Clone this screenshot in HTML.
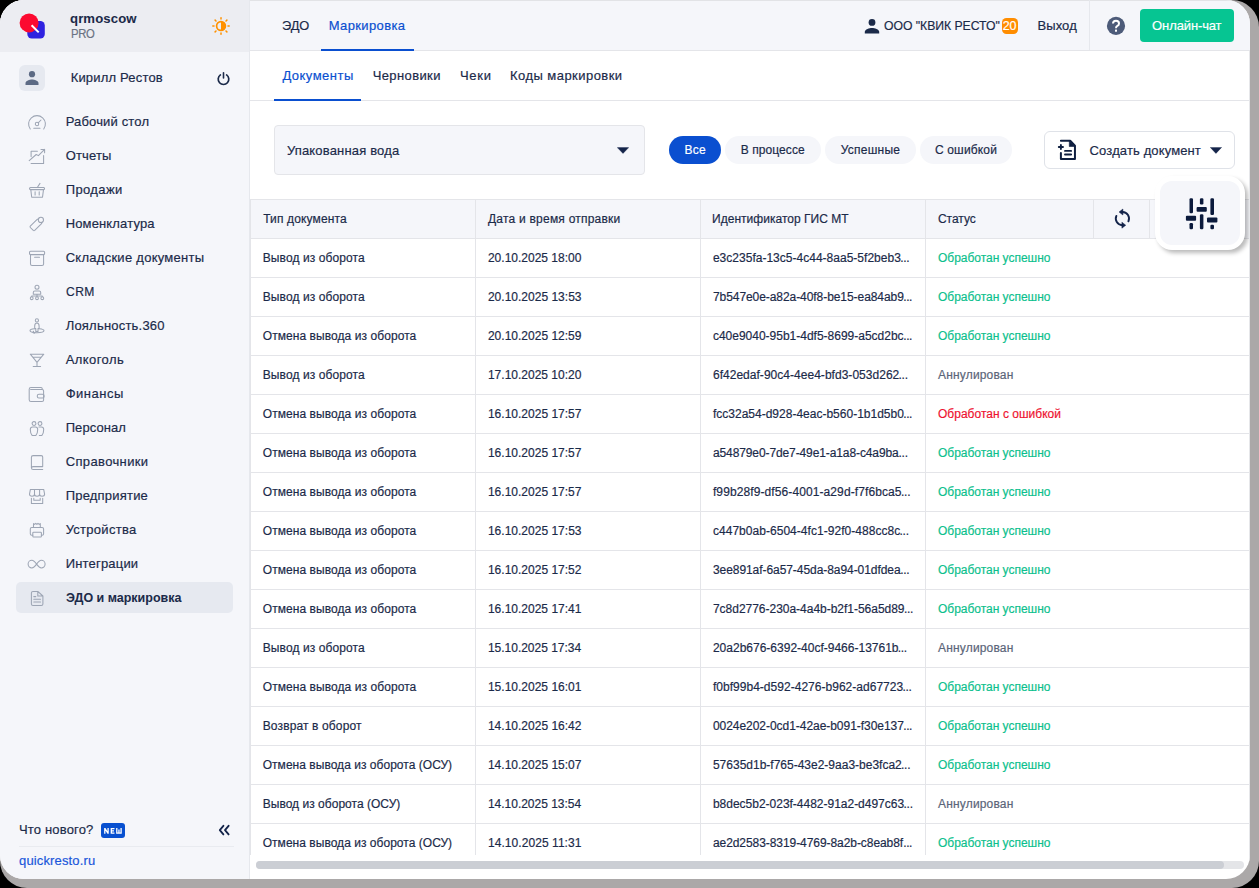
<!DOCTYPE html>
<html lang="ru">
<head>
<meta charset="utf-8">
<title>Quick Resto</title>
<style>
*{box-sizing:border-box;margin:0;padding:0}
html,body{width:1259px;height:888px;overflow:hidden;background:#000}
body{font-family:"Liberation Sans",sans-serif;color:#1b2a49;font-size:13px;position:relative;-webkit-text-stroke:0.18px}
.shadow{position:absolute;left:0;top:0;width:1259px;height:888px;background:#aba8a8;border-radius:24px 27px 27px 27px}
.win{position:absolute;left:0;top:0;width:1250px;height:879px;background:#fff;border-radius:24px;overflow:hidden}
.side{position:absolute;left:0;top:0;width:250px;height:879px;background:#f5f6fa;border-right:1px solid #e6e8ed}
.side-head{position:absolute;left:0;top:0;width:249px;height:52px;background:#ecedf2}
.t{position:absolute;white-space:nowrap;line-height:16px}
.ico{position:absolute;left:27px;width:20px;height:20px}
.ico svg{width:20px;height:20px;fill:none;stroke:#9da5b4;stroke-width:1.05;stroke-linecap:round;stroke-linejoin:round}
.head{position:absolute;left:250px;top:0;width:1000px;height:51px;background:#f5f6fa;border-bottom:1px solid #e4e5e9}
.pill{position:absolute;top:136px;height:28px;border-radius:14px;background:#f5f6fa}
.hl{position:absolute;height:1px;background:#e4e5e9}
.vl{position:absolute;width:1px;background:#e4e5e9}
.ok{color:#0cbf8d}.err{color:#ee1230}.ann{color:#5b6579}
</style>
</head>
<body>
<div class="shadow"></div>
<div class="win">

<div class="side">
  <div class="side-head"></div>
  <svg style="position:absolute;left:18px;top:11px" width="30" height="30" viewBox="0 0 30 30">
    <rect x="9.3" y="10" width="17.5" height="17.5" rx="4.5" fill="#2f22e0"/>
    <circle cx="11.1" cy="11.9" r="9.5" fill="#fc0a30"/>
    <line x1="13.6" y1="14.3" x2="20.7" y2="21.4" stroke="#fff" stroke-width="2"/>
  </svg>
  <div class="t" style="left:70.00px;top:11px;font-size:13.5px;letter-spacing:0.099px;font-weight:bold;transform:scaleX(0.975);transform-origin:0 50%;-webkit-text-stroke:0.05px;">qrmoscow</div>
  <div class="t" style="left:71.00px;top:26px;font-size:12px;letter-spacing:-0.311px;color:#6a7283;transform:scaleX(0.94);transform-origin:0 50%;">PRO</div>
  <svg style="position:absolute;left:211px;top:16px" width="20" height="20" viewBox="0 0 20 20">
    <g stroke="#ff9100" stroke-width="1.5" stroke-linecap="round">
      <line x1="10" y1="1.8" x2="10" y2="3"/><line x1="10" y1="17" x2="10" y2="18.2"/>
      <line x1="1.8" y1="10" x2="3" y2="10"/><line x1="17" y1="10" x2="18.2" y2="10"/>
      <line x1="4.1" y1="4.1" x2="5" y2="5"/><line x1="15" y1="15" x2="15.9" y2="15.9"/>
      <line x1="4.1" y1="15.9" x2="5" y2="15"/><line x1="15" y1="5" x2="15.9" y2="4.1"/>
    </g>
    <circle cx="10" cy="10" r="4.4" fill="none" stroke="#ff9100" stroke-width="1.7"/>
    <path d="M10 5.4 A4.6 4.6 0 0 1 10 14.6 Z" fill="#ff9100"/>
  </svg>
  <div style="position:absolute;left:19px;top:65px;width:26px;height:26px;border-radius:6px;background:#e6e9f0"></div>
  <svg style="position:absolute;left:24px;top:70px" width="16" height="16" viewBox="0 0 16 16">
    <circle cx="8" cy="4.2" r="3.1" fill="#5c6a84"/>
    <path d="M1.5 14.9 v-1.9 c0-2.3 4.2-3.5 6.5-3.5 s6.5 1.2 6.5 3.5 v1.9 z" fill="#5c6a84"/>
  </svg>
  <div class="t" style="left:70.66px;top:70px;font-size:13px;letter-spacing:0.183px;">Кирилл Рестов</div>
  <svg style="position:absolute;left:215px;top:70px" width="17" height="17" viewBox="0 0 17 17">
    <path d="M5.4 4.9 A5.3 5.3 0 1 0 11.6 4.9" fill="none" stroke="#1b2a49" stroke-width="1.7" stroke-linecap="round"/>
    <line x1="8.5" y1="2.7" x2="8.5" y2="8" stroke="#1b2a49" stroke-width="1.6" stroke-linecap="round"/>
  </svg>
<div class="ico" style="top:112px"><svg viewBox="0 0 20 20"><path d="M3.25 17 A8.4 8.4 0 1 1 16.75 17"/><circle cx="10" cy="12" r="1.7"/><line x1="11.2" y1="10.8" x2="14" y2="8"/><line x1="6.8" y1="16.2" x2="13" y2="16.2"/></svg></div><div class="t" style="left:65.66px;top:114px;font-size:13px;letter-spacing:0.160px;">Рабочий стол</div>
<div class="ico" style="top:146px"><svg viewBox="0 0 20 20"><path d="M2.2 14.6 L9.2 8.5 L11.4 9.6 L17.6 3.4 M14 3.4 H17.6 V6.8 M10.4 5.2 H4.1 V10.6 M4.1 17.5 H16.6 V9.4"/></svg></div><div class="t" style="left:65.66px;top:148px;font-size:13px;letter-spacing:0.168px;">Отчеты</div>
<div class="ico" style="top:180px"><svg viewBox="0 0 20 20"><path d="M13 3.4 L10.3 7.5"/><rect x="2.5" y="7.5" width="15.1" height="2.1" rx="1"/><path d="M3.8 9.6 L4.7 17.2 H15.5 L16.5 9.6 M8.1 11.8 V15 M12.2 11.8 V15"/></svg></div><div class="t" style="left:65.66px;top:182px;font-size:13px;letter-spacing:0.398px;">Продажи</div>
<div class="ico" style="top:214px"><svg viewBox="0 0 20 20"><path d="M11.4 5.1 Q10.6 4.9 9.9 5.6 L3.3 12.2 Q2.7 12.9 3.3 13.5 L6.3 16.4 Q7 17 7.7 16.4 L14.3 9.8 Q14.9 9.2 14.8 8.5"/><circle cx="13.9" cy="5.9" r="2.6"/></svg></div><div class="t" style="left:65.66px;top:216px;font-size:13px;letter-spacing:0.144px;">Номенклатура</div>
<div class="ico" style="top:248px"><svg viewBox="0 0 20 20"><rect x="2.5" y="3.3" width="15.1" height="3.3" rx="1"/><path d="M3.5 6.6 V15.9 Q3.5 17.5 5.1 17.5 H15 Q16.6 17.5 16.6 15.9 V6.6 M7.6 9.2 H12.5"/></svg></div><div class="t" style="left:65.66px;top:250px;font-size:13px;letter-spacing:0.270px;">Складские документы</div>
<div class="ico" style="top:282px"><svg viewBox="0 0 20 20"><circle cx="10" cy="5.3" r="2"/><path d="M6.3 12.2 V10.4 Q6.3 8.9 7.8 8.9 H12.2 Q13.7 8.9 13.7 10.4 V12.2 Z M10 12.2 V14 M4.7 14.8 V14 H15.3 V14.8 M10 14 V14.8"/><circle cx="4.7" cy="16.2" r="1.4"/><circle cx="10" cy="16.2" r="1.4"/><circle cx="15.3" cy="16.2" r="1.4"/></svg></div><div class="t" style="left:66.00px;top:284px;font-size:13px;letter-spacing:0.465px;transform:scaleX(0.93);transform-origin:0 50%;">CRM</div>
<div class="ico" style="top:316px"><svg viewBox="0 0 20 20"><circle cx="9.9" cy="4.4" r="1.6"/><path d="M7.7 10 Q7.7 6.9 9.9 6.9 Q12.1 6.9 12.1 10 V12.6 H11 V15.4 H8.8 V12.6 H7.7 Z"/><path d="M7.4 12.7 C4.6 13 3 13.7 3 14.6 C3 15.8 6 16.7 9.9 16.7 C13.8 16.7 17 15.8 17 14.6 C17 13.7 15.2 13 12.4 12.7 M6.6 15.3 L5.8 16.6 L7.4 17.3"/></svg></div><div class="t" style="left:65.66px;top:318px;font-size:13px;letter-spacing:0.213px;">Лояльность.360</div>
<div class="ico" style="top:350px"><svg viewBox="0 0 20 20"><path d="M3.3 4.2 H16.8 L10 12.3 Z M10 12.3 V16.4 M6.2 16.4 H13.6 M5.9 7.2 H14.2"/></svg></div><div class="t" style="left:65.66px;top:352px;font-size:13px;letter-spacing:0.437px;">Алкоголь</div>
<div class="ico" style="top:384px"><svg viewBox="0 0 20 20"><path d="M15.2 5.5 V4.6 Q15.2 3.4 14 3.4 H4 Q2.2 3.4 2.2 5.2 V15.8 Q2.2 17.5 4 17.5 H15 Q16.6 17.5 16.6 15.9 V7.1 Q16.6 5.5 15 5.5 H3.6"/><rect x="10.3" y="10.2" width="6.8" height="3.8" rx="1.6"/></svg></div><div class="t" style="left:65.66px;top:386px;font-size:13px;letter-spacing:0.504px;">Финансы</div>
<div class="ico" style="top:418px"><svg viewBox="0 0 20 20"><circle cx="7" cy="5.5" r="1.9"/><circle cx="13" cy="5.5" r="1.9"/><path d="M3.3 11.6 Q3.3 9 5.6 9 H8.4 Q10.7 9 10.7 11.6 Q10.7 15.4 8.9 17.4 H5.1 Q3.3 15.4 3.3 11.6 Z"/><path d="M11.9 9 H14.4 Q16.7 9 16.7 11.6 Q16.7 15.4 14.9 17.4 H12.3"/></svg></div><div class="t" style="left:65.66px;top:420px;font-size:13px;letter-spacing:0.084px;">Персонал</div>
<div class="ico" style="top:452px"><svg viewBox="0 0 20 20"><path d="M15.7 17.5 H6.2 Q4.4 17.5 4.4 15.8 V5.3 Q4.4 3.6 6.2 3.6 H14.2 Q15.7 3.6 15.7 5.1 V14.6 H6 Q4.6 14.6 4.5 16"/></svg></div><div class="t" style="left:65.66px;top:454px;font-size:13px;letter-spacing:0.370px;">Справочники</div>
<div class="ico" style="top:486px"><svg viewBox="0 0 20 20"><path d="M3.4 3.4 H16.7 L17.6 8.2 Q17.6 10.2 15.1 10.2 Q12.6 10.2 12.6 8.2 Q12.6 10.2 10.05 10.2 Q7.5 10.2 7.5 8.2 Q7.5 10.2 5 10.2 Q2.5 10.2 2.5 8.2 Z M7.5 3.4 V8.2 M12.6 3.4 V8.2"/><path d="M4.4 12.3 V17.5 H15.7 V12.3 M6.8 12.3 V14.2 H13.2 V12.3"/></svg></div><div class="t" style="left:65.66px;top:488px;font-size:13px;letter-spacing:0.205px;">Предприятие</div>
<div class="ico" style="top:520px"><svg viewBox="0 0 20 20"><path d="M6.5 7.4 V3.6 L7.6 4.4 L8.8 3.4 L9.9 4.4 L11 3.4 L12.2 4.4 L13.3 3.6 V7.4"/><path d="M5.8 15.2 H4.8 Q3.3 15.2 3.3 13.7 V8.9 Q3.3 7.4 4.8 7.4 H15.1 Q16.6 7.4 16.6 8.9 V13.7 Q16.6 15.2 15.1 15.2 H14.4"/><rect x="5.8" y="12.2" width="8.6" height="4.8" rx="0.8"/></svg></div><div class="t" style="left:65.66px;top:522px;font-size:13px;letter-spacing:0.276px;">Устройства</div>
<div class="ico" style="top:554px"><svg viewBox="0 0 20 20"><path d="M9.6 10.1 C7.6 7.4 6.6 6.3 4.9 6.3 C2.8 6.3 1.1 8 1.1 10.1 C1.1 12.2 2.8 13.9 4.9 13.9 C6.6 13.9 7.6 12.8 9.6 10.1 C11.6 7.4 12.6 6.3 14.3 6.3 C16.4 6.3 18.1 8 18.1 10.1 C18.1 12.2 16.4 13.9 14.3 13.9 C12.6 13.9 11.6 12.8 9.6 10.1 Z"/></svg></div><div class="t" style="left:65.66px;top:556px;font-size:13px;letter-spacing:0.189px;">Интеграции</div>
<div style="position:absolute;left:16px;top:582px;width:217px;height:31.4px;border-radius:5px;background:#e6e9f0"></div>
<div class="ico" style="top:588px"><svg viewBox="0 0 20 20"><path d="M10.8 3.4 H6 Q4.4 3.4 4.4 5 V15.9 Q4.4 17.5 6 17.5 H14.3 Q15.9 17.5 15.9 15.9 V8 Z M10.8 3.4 V8 H15.9 M6.8 8.6 H8.8 M6.8 11.2 H13.5 M6.8 14 H13.5"/></svg></div><div class="t" style="left:66.00px;top:590px;font-size:13px;letter-spacing:-0.004px;font-weight:bold;transform:scaleX(0.96);transform-origin:0 50%;-webkit-text-stroke:0.05px;">ЭДО и маркировка</div>

  <div class="t" style="left:18.88px;top:822px;font-size:13px;letter-spacing:0.182px;">Что нового?</div>
  <svg style="position:absolute;left:101px;top:823px" width="24" height="15" viewBox="0 0 24 15"><rect width="24" height="15" rx="3" fill="#0850d0"/><path d="M3.8 5 V10.75 M7.1 5 V10.75 M3.9 5.4 L7 10.35 M10.3 5 V10.75 M10.3 5.65 H13.5 M10.3 10.1 H13.5 M10.3 7.9 H13 M15.8 5 V10.75 M20.1 5 V10.75 M15.8 10.1 H20.1 M17.95 6.4 V10.1" fill="none" stroke="#fff" stroke-width="1.3"/></svg>
  <svg style="position:absolute;left:217px;top:823px" width="14" height="14" viewBox="0 0 14 14"><path d="M6.4 2.8 L2.8 7.1 L6.4 11.4 M11.6 2.8 L8 7.1 L11.6 11.4" fill="none" stroke="#14244a" stroke-width="1.85" stroke-linecap="round" stroke-linejoin="round"/></svg>
  <div class="hl" style="left:19px;top:846px;width:215px;background:#e9ebf0"></div>
  <div class="t" style="left:19.04px;top:853px;font-size:13px;letter-spacing:0.142px;color:#1a56db;">quickresto.ru</div>
</div>


<div class="head"></div>
  <div class="hl" style="left:250px;top:0;width:1000px;background:#e2e3e6"></div>
  <div class="t" style="left:282.00px;top:18px;font-size:13px;letter-spacing:-0.098px;transform:scaleX(0.99);transform-origin:0 50%;">ЭДО</div>
  <div class="t" style="left:328.73px;top:18px;font-size:13px;letter-spacing:0.367px;color:#0a4fd0;">Маркировка</div>
  <div style="position:absolute;left:321px;top:49px;width:93px;height:2px;background:#0a4fd0"></div>
  <svg style="position:absolute;left:864px;top:18px" width="16" height="16" viewBox="0 0 16 16">
    <circle cx="8" cy="4.4" r="3.4" fill="#1b2a49"/>
    <path d="M0.8 15.6 v-1.8 c0-2.6 4.6-3.9 7.2-3.9 s7.2 1.3 7.2 3.9 v1.8 z" fill="#1b2a49"/>
  </svg>
  <div class="t" style="left:884.00px;top:18px;font-size:13px;letter-spacing:-0.037px;transform:scaleX(0.94);transform-origin:0 50%;">ООО "КВИК РЕСТО"</div>
  <div style="position:absolute;left:1002px;top:18px;width:16px;height:16px;border-radius:4.5px;background:#ff8d00"></div>
  <div class="t" style="left:1002.77px;top:18px;font-size:12.5px;letter-spacing:-0.296px;color:#fff;">20</div>
  <div class="t" style="left:1037.45px;top:18px;font-size:13px;letter-spacing:0.102px;">Выход</div>
  <div class="vl" style="left:1089px;top:0;height:50px;background:#e6e8ed"></div>
  <svg style="position:absolute;left:1106px;top:16px" width="20" height="20" viewBox="0 0 20 20">
    <circle cx="10" cy="9.9" r="9.1" fill="#4d5b79"/>
    <path d="M7 7.6 Q7 4.8 10 4.8 Q13 4.8 13 7.4 Q13 9 11.4 9.9 Q10 10.7 10 12.2" fill="none" stroke="#fff" stroke-width="2"/>
    <rect x="9" y="13.6" width="2" height="2.1" fill="#fff"/>
  </svg>
  <div style="position:absolute;left:1140px;top:9px;width:94px;height:33px;border-radius:4px;background:#06c592"></div>
  <div class="t" style="left:1152.11px;top:18px;font-size:13px;letter-spacing:-0.120px;color:#fff;">Онлайн-чат</div>


<div class="t" style="left:282.42px;top:68px;font-size:13px;letter-spacing:0.479px;color:#0a4fd0;">Документы</div>
<div class="t" style="left:372.65px;top:68px;font-size:13px;letter-spacing:0.397px;">Черновики</div>
<div class="t" style="left:459.92px;top:68px;font-size:13px;letter-spacing:0.749px;">Чеки</div>
<div class="t" style="left:509.97px;top:68px;font-size:13px;letter-spacing:0.459px;">Коды маркировки</div>
<div class="hl" style="left:250px;top:100px;width:999px"></div>
<div style="position:absolute;left:274px;top:99px;width:87px;height:2px;background:#0a4fd0"></div>

<div style="position:absolute;left:274px;top:125px;width:371px;height:50px;border:1px solid #e4e5e9;border-radius:4px;background:#f5f6fa"></div>
<div class="t" style="left:286.94px;top:143px;font-size:13px;letter-spacing:0.163px;">Упакованная вода</div>
<svg style="position:absolute;left:616.5px;top:147px" width="12" height="7" viewBox="0 0 12 7"><path d="M0.3 0.6 H11.7 L6 6.4 Z" fill="#14244a" stroke="#14244a" stroke-width="0.4" stroke-linejoin="round"/></svg>

<div class="pill" style="left:669px;width:52px;background:#0a4fd0"></div>
<div class="pill" style="left:725px;width:96px"></div>
<div class="pill" style="left:825px;width:91px"></div>
<div class="pill" style="left:920px;width:92px"></div>
<div class="t" style="left:684.51px;top:142px;font-size:12px;letter-spacing:0.265px;color:#fff;">Все</div>
<div class="t" style="left:740.63px;top:142px;font-size:12px;letter-spacing:0.090px;">В процессе</div>
<div class="t" style="left:840.65px;top:142px;font-size:12px;letter-spacing:0.253px;">Успешные</div>
<div class="t" style="left:934.99px;top:142px;font-size:12px;letter-spacing:0.151px;">С ошибкой</div>

<div style="position:absolute;left:1044px;top:131px;width:191px;height:38px;border:1px solid #dfe2e8;border-radius:6px;background:#fff"></div>
<svg style="position:absolute;left:1057px;top:139px" width="21" height="22" viewBox="0 0 21 22">
  <path d="M3.9 1.75 H13.2 L17.95 6.8 V19.9 H3.9 V14" fill="none" stroke="#0f1f40" stroke-width="2" stroke-linejoin="round" stroke-linecap="round"/>
  <path d="M12.3 1.75 V7.5 H17.95 Z" fill="#0f1f40" stroke="#0f1f40" stroke-width="0.6" stroke-linejoin="round"/>
  <path d="M1.8 8 H6 M3.9 6 V10" stroke="#0f1f40" stroke-width="1.9" stroke-linecap="round" fill="none"/>
  <path d="M8 11.9 H14.1 M8 15.55 H14.1" stroke="#0f1f40" stroke-width="1.9" stroke-linecap="round" fill="none"/>
</svg>
<div class="t" style="left:1089.61px;top:143px;font-size:13px;letter-spacing:0.126px;">Создать документ</div>
<svg style="position:absolute;left:1209.7px;top:147px" width="12" height="7" viewBox="0 0 12 7"><path d="M0.3 0.4 H11.6 L5.95 6.4 Z" fill="#14244a" stroke="#14244a" stroke-width="0.4" stroke-linejoin="round"/></svg>

<div style="position:absolute;left:250px;top:199px;width:999px;height:40px;background:#f5f6fa;border-top:1px solid #e4e5e9;border-bottom:1px solid #e4e5e9"></div>
<div class="vl" style="left:250px;top:199px;height:656px"></div>
<div class="vl" style="left:475px;top:199px;height:656px"></div>
<div class="vl" style="left:700px;top:199px;height:656px"></div>
<div class="vl" style="left:925px;top:199px;height:656px"></div>
<div class="vl" style="left:1093px;top:199px;height:40px"></div>
<div class="vl" style="left:1149px;top:199px;height:40px"></div>
<div class="t" style="left:263.18px;top:211px;font-size:12px;letter-spacing:0.141px;">Тип документа</div>
<div class="t" style="left:487.98px;top:211px;font-size:12px;letter-spacing:0.225px;">Дата и время отправки</div>
<div class="t" style="left:712.09px;top:211px;font-size:12px;letter-spacing:0.019px;">Идентификатор ГИС МТ</div>
<div class="t" style="left:937.99px;top:211px;font-size:12px;letter-spacing:-0.028px;">Статус</div>
<div class="t" style="left:262.74px;top:250px;font-size:12px;letter-spacing:0.091px;">Вывод из оборота</div><div class="t" style="left:487.94px;top:250px;font-size:12px;letter-spacing:0.003px;">20.10.2025 18:00</div><div class="t" style="left:712.95px;top:250px;font-size:12px;letter-spacing:0.013px;">e3c235fa-13c5-4c44-8aa5-5f2beb3</div><div class="t" style="left:900.36px;top:250px;font-size:12px;letter-spacing:-0.414px;">...</div><div class="t" style="left:938.01px;top:250px;font-size:12px;letter-spacing:-0.022px;color:#0cbf8d;">Обработан успешно</div>
<div class="hl" style="left:250px;top:277px;width:999px"></div>
<div class="t" style="left:262.74px;top:289px;font-size:12px;letter-spacing:0.091px;">Вывод из оборота</div><div class="t" style="left:487.94px;top:289px;font-size:12px;letter-spacing:0.009px;">20.10.2025 13:53</div><div class="t" style="left:712.95px;top:289px;font-size:12px;letter-spacing:-0.064px;">7b547e0e-a82a-40f8-be15-ea84ab9</div><div class="t" style="left:903.32px;top:289px;font-size:12px;letter-spacing:-0.428px;">...</div><div class="t" style="left:938.01px;top:289px;font-size:12px;letter-spacing:-0.022px;color:#0cbf8d;">Обработан успешно</div>
<div class="hl" style="left:250px;top:316px;width:999px"></div>
<div class="t" style="left:262.74px;top:328px;font-size:12px;letter-spacing:0.069px;">Отмена вывода из оборота</div><div class="t" style="left:487.94px;top:328px;font-size:12px;letter-spacing:0.008px;">20.10.2025 12:59</div><div class="t" style="left:712.95px;top:328px;font-size:12px;letter-spacing:-0.006px;">c40e9040-95b1-4df5-8699-a5cd2bc</div><div class="t" style="left:903.32px;top:328px;font-size:12px;letter-spacing:-0.428px;">...</div><div class="t" style="left:938.01px;top:328px;font-size:12px;letter-spacing:-0.022px;color:#0cbf8d;">Обработан успешно</div>
<div class="hl" style="left:250px;top:355px;width:999px"></div>
<div class="t" style="left:262.74px;top:367px;font-size:12px;letter-spacing:0.091px;">Вывод из оборота</div><div class="t" style="left:487.94px;top:367px;font-size:12px;letter-spacing:0.003px;">17.10.2025 10:20</div><div class="t" style="left:712.95px;top:367px;font-size:12px;letter-spacing:0.028px;">6f42edaf-90c4-4ee4-bfd3-053d262</div><div class="t" style="left:898.45px;top:367px;font-size:12px;letter-spacing:-0.231px;">...</div><div class="t" style="left:938.01px;top:367px;font-size:12px;letter-spacing:0.176px;color:#5b6579;">Аннулирован</div>
<div class="hl" style="left:250px;top:394px;width:999px"></div>
<div class="t" style="left:262.74px;top:406px;font-size:12px;letter-spacing:0.069px;">Отмена вывода из оборота</div><div class="t" style="left:487.94px;top:406px;font-size:12px;letter-spacing:0.007px;">16.10.2025 17:57</div><div class="t" style="left:712.95px;top:406px;font-size:12px;letter-spacing:0.005px;">fcc32a54-d928-4eac-b560-1b1d5b0</div><div class="t" style="left:903.32px;top:406px;font-size:12px;letter-spacing:-0.428px;">...</div><div class="t" style="left:938.01px;top:406px;font-size:12px;letter-spacing:0.009px;color:#ee1230;">Обработан с ошибкой</div>
<div class="hl" style="left:250px;top:433px;width:999px"></div>
<div class="t" style="left:262.74px;top:445px;font-size:12px;letter-spacing:0.069px;">Отмена вывода из оборота</div><div class="t" style="left:487.94px;top:445px;font-size:12px;letter-spacing:0.007px;">16.10.2025 17:57</div><div class="t" style="left:712.95px;top:445px;font-size:12px;letter-spacing:-0.105px;">a54879e0-7de7-49e1-a1a8-c4a9ba</div><div class="t" style="left:898.45px;top:445px;font-size:12px;letter-spacing:-0.231px;">...</div><div class="t" style="left:938.01px;top:445px;font-size:12px;letter-spacing:-0.022px;color:#0cbf8d;">Обработан успешно</div>
<div class="hl" style="left:250px;top:472px;width:999px"></div>
<div class="t" style="left:262.74px;top:484px;font-size:12px;letter-spacing:0.069px;">Отмена вывода из оборота</div><div class="t" style="left:487.94px;top:484px;font-size:12px;letter-spacing:0.007px;">16.10.2025 17:57</div><div class="t" style="left:712.95px;top:484px;font-size:12px;letter-spacing:0.099px;">f99b28f9-df56-4001-a29d-f7f6bca5</div><div class="t" style="left:901.04px;top:484px;font-size:12px;letter-spacing:-0.256px;">...</div><div class="t" style="left:938.01px;top:484px;font-size:12px;letter-spacing:-0.022px;color:#0cbf8d;">Обработан успешно</div>
<div class="hl" style="left:250px;top:511px;width:999px"></div>
<div class="t" style="left:262.74px;top:523px;font-size:12px;letter-spacing:0.069px;">Отмена вывода из оборота</div><div class="t" style="left:487.94px;top:523px;font-size:12px;letter-spacing:0.009px;">16.10.2025 17:53</div><div class="t" style="left:712.95px;top:523px;font-size:12px;letter-spacing:0.037px;">c447b0ab-6504-4fc1-92f0-488cc8c</div><div class="t" style="left:899.45px;top:523px;font-size:12px;letter-spacing:-0.231px;">...</div><div class="t" style="left:938.01px;top:523px;font-size:12px;letter-spacing:-0.022px;color:#0cbf8d;">Обработан успешно</div>
<div class="hl" style="left:250px;top:550px;width:999px"></div>
<div class="t" style="left:262.74px;top:562px;font-size:12px;letter-spacing:0.069px;">Отмена вывода из оборота</div><div class="t" style="left:487.94px;top:562px;font-size:12px;letter-spacing:0.007px;">16.10.2025 17:52</div><div class="t" style="left:712.95px;top:562px;font-size:12px;letter-spacing:-0.062px;">3ee891af-6a57-45da-8a94-01dfdea</div><div class="t" style="left:900.36px;top:562px;font-size:12px;letter-spacing:-0.414px;">...</div><div class="t" style="left:938.01px;top:562px;font-size:12px;letter-spacing:-0.022px;color:#0cbf8d;">Обработан успешно</div>
<div class="hl" style="left:250px;top:589px;width:999px"></div>
<div class="t" style="left:262.74px;top:601px;font-size:12px;letter-spacing:0.069px;">Отмена вывода из оборота</div><div class="t" style="left:487.94px;top:601px;font-size:12px;letter-spacing:0.005px;">16.10.2025 17:41</div><div class="t" style="left:712.95px;top:601px;font-size:12px;letter-spacing:-0.019px;">7c8d2776-230a-4a4b-b2f1-56a5d89</div><div class="t" style="left:903.94px;top:601px;font-size:12px;letter-spacing:-0.300px;">...</div><div class="t" style="left:938.01px;top:601px;font-size:12px;letter-spacing:-0.022px;color:#0cbf8d;">Обработан успешно</div>
<div class="hl" style="left:250px;top:628px;width:999px"></div>
<div class="t" style="left:262.74px;top:640px;font-size:12px;letter-spacing:0.091px;">Вывод из оборота</div><div class="t" style="left:487.94px;top:640px;font-size:12px;letter-spacing:-0.015px;">15.10.2025 17:34</div><div class="t" style="left:712.95px;top:640px;font-size:12px;letter-spacing:0.003px;">20a2b676-6392-40cf-9466-13761b</div><div class="t" style="left:897.66px;top:640px;font-size:12px;letter-spacing:-0.233px;">...</div><div class="t" style="left:938.01px;top:640px;font-size:12px;letter-spacing:0.176px;color:#5b6579;">Аннулирован</div>
<div class="hl" style="left:250px;top:667px;width:999px"></div>
<div class="t" style="left:262.74px;top:679px;font-size:12px;letter-spacing:0.069px;">Отмена вывода из оборота</div><div class="t" style="left:487.94px;top:679px;font-size:12px;letter-spacing:0.005px;">15.10.2025 16:01</div><div class="t" style="left:712.95px;top:679px;font-size:12px;letter-spacing:0.025px;">f0bf99b4-d592-4276-b962-ad67723</div><div class="t" style="left:902.40px;top:679px;font-size:12px;letter-spacing:-0.302px;">...</div><div class="t" style="left:938.01px;top:679px;font-size:12px;letter-spacing:-0.022px;color:#0cbf8d;">Обработан успешно</div>
<div class="hl" style="left:250px;top:706px;width:999px"></div>
<div class="t" style="left:262.74px;top:718px;font-size:12px;letter-spacing:0.127px;">Возврат в оборот</div><div class="t" style="left:487.94px;top:718px;font-size:12px;letter-spacing:0.007px;">14.10.2025 16:42</div><div class="t" style="left:712.95px;top:718px;font-size:12px;letter-spacing:-0.042px;">0024e202-0cd1-42ae-b091-f30e137</div><div class="t" style="left:903.32px;top:718px;font-size:12px;letter-spacing:-0.428px;">...</div><div class="t" style="left:938.01px;top:718px;font-size:12px;letter-spacing:-0.022px;color:#0cbf8d;">Обработан успешно</div>
<div class="hl" style="left:250px;top:745px;width:999px"></div>
<div class="t" style="left:262.74px;top:757px;font-size:12px;letter-spacing:0.030px;">Отмена вывода из оборота (ОСУ)</div><div class="t" style="left:487.94px;top:757px;font-size:12px;letter-spacing:0.007px;">14.10.2025 15:07</div><div class="t" style="left:712.95px;top:757px;font-size:12px;letter-spacing:-0.000px;">57635d1b-f765-43e2-9aa3-be3fca2</div><div class="t" style="left:901.04px;top:757px;font-size:12px;letter-spacing:-0.256px;">...</div><div class="t" style="left:938.01px;top:757px;font-size:12px;letter-spacing:-0.022px;color:#0cbf8d;">Обработан успешно</div>
<div class="hl" style="left:250px;top:784px;width:999px"></div>
<div class="t" style="left:262.74px;top:796px;font-size:12px;letter-spacing:0.025px;">Вывод из оборота (ОСУ)</div><div class="t" style="left:487.94px;top:796px;font-size:12px;letter-spacing:-0.015px;">14.10.2025 13:54</div><div class="t" style="left:712.95px;top:796px;font-size:12px;letter-spacing:-0.011px;">b8dec5b2-023f-4482-91a2-d497c63</div><div class="t" style="left:903.45px;top:796px;font-size:12px;letter-spacing:-0.231px;">...</div><div class="t" style="left:938.01px;top:796px;font-size:12px;letter-spacing:0.176px;color:#5b6579;">Аннулирован</div>
<div class="hl" style="left:250px;top:823px;width:999px"></div>
<div class="t" style="left:262.74px;top:835px;font-size:12px;letter-spacing:0.030px;">Отмена вывода из оборота (ОСУ)</div><div class="t" style="left:487.94px;top:835px;font-size:12px;letter-spacing:0.064px;">14.10.2025 11:31</div><div class="t" style="left:712.95px;top:835px;font-size:12px;letter-spacing:-0.065px;">ae2d2583-8319-4769-8a2b-c8eab8f</div><div class="t" style="left:903.32px;top:835px;font-size:12px;letter-spacing:-0.428px;">...</div><div class="t" style="left:938.01px;top:835px;font-size:12px;letter-spacing:-0.022px;color:#0cbf8d;">Обработан успешно</div>

<svg style="position:absolute;left:1110px;top:206px" width="25" height="25" viewBox="0 0 25 25"><g fill="none" stroke="#14244a" stroke-width="1.9" stroke-linecap="round"><path d="M18.43 15.28 A6.6 6.6 0 0 0 12.63 6"/><path d="M6.37 9.92 A6.6 6.6 0 0 0 12.17 19.2"/></g><path d="M12.9 3 L9.05 6 L12.9 9 Z M11.9 16.2 L15.75 19.2 L11.9 22.2 Z" fill="#14244a" stroke="#14244a" stroke-width="0.5" stroke-linejoin="round"/></svg>

<div style="position:absolute;left:1155px;top:176px;width:90px;height:74px;border-radius:17px;background:#fff;box-shadow:3px 3px 4px rgba(0,0,0,.27)"></div>
<div style="position:absolute;left:1160px;top:181px;width:80px;height:64px;border-radius:12px;background:#f5f6fa"></div>
<svg style="position:absolute;left:1185px;top:197px" width="34" height="34" viewBox="0 0 34 34" fill="#0b1a3c">
  <rect x="4.5" y="1.2" width="3.5" height="15.1" rx="1.2"/><rect x="4.5" y="26" width="3.5" height="6.2" rx="1.2"/><rect x="0.9" y="18.8" width="10.2" height="4.9" rx="1"/>
  <rect x="14.9" y="1.2" width="3.5" height="6.2" rx="1.2"/><rect x="14.9" y="17.3" width="3.5" height="14.9" rx="1.2"/><rect x="11.6" y="9.9" width="10.2" height="4.9" rx="1"/>
  <rect x="25.4" y="1.2" width="3.6" height="16.8" rx="1.2"/><rect x="25.4" y="27.7" width="3.6" height="4.5" rx="1.2"/><rect x="22" y="20.5" width="10.4" height="5" rx="1"/>
</svg>

<div class="vl" style="left:1249px;top:51px;height:828px;background:#e6e7ea"></div>

<div style="position:absolute;left:256px;top:861px;width:988px;height:8px;border-radius:4px;background:#e4e5e8"></div>
<div style="position:absolute;left:256px;top:861px;width:968px;height:8px;border-radius:4px;background:#cbced4"></div>

</div>
</body>
</html>
